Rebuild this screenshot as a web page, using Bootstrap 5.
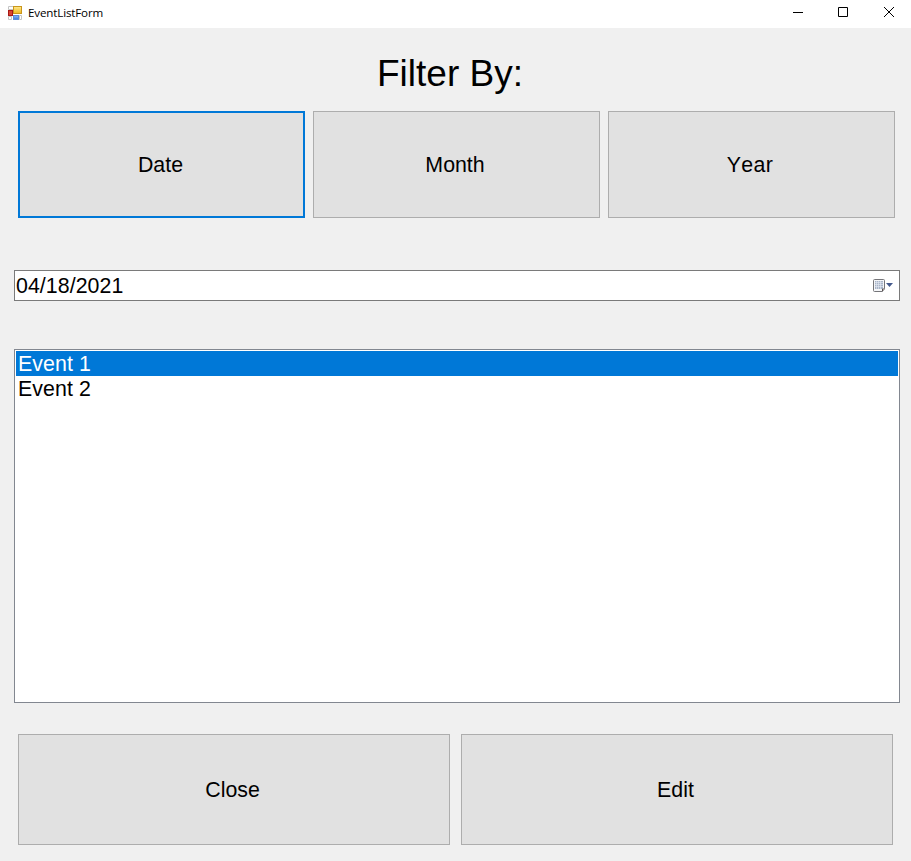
<!DOCTYPE html>
<html lang="en">
<head>
<meta charset="utf-8">
<title>EventListForm</title>
<meta name="viewport" content="width=device-width, initial-scale=1">
<link href="https://cdn.jsdelivr.net/npm/bootstrap@5.3.0/dist/css/bootstrap.min.css" rel="stylesheet">
<style>
body { background: #f0f0f0; color: #000; font: 21.33px/25px "Liberation Sans", Arial, sans-serif; font-kerning: none; height: 861px; }
.titlebar { height: 28px; padding-left: 8px; font: 12px/16px "Open Sans", "Noto Sans", sans-serif; }
.app-name { margin-left: 6px; font-size: 11.6px; letter-spacing: -.15px; padding-bottom: 2px; }
.app-icon { margin-bottom: 3px; }
.caption-btn { width: 46px; height: 25px; padding-left: 2px; }
.heading { font-size: 37px; line-height: 44px; padding: 24px 11px 15px 0; margin: 0; font-weight: 400; }
.form-btn { background: #e1e1e1; border: 1px solid #adadad; color: #000; font-size: 21.33px; line-height: 25px; padding: 2px 3px 0 0; flex: 1 1 0; font-kerning: none; }
.form-btn:hover { background: #e5f1fb; border-color: #0078d7; }
.form-btn.is-default { border: 2px solid #0078d7; padding-right: 2px; }
.filters { display: grid; grid-template-columns: repeat(3, 287px); gap: 8px; margin: 0 16px 0 18px; height: 107px; }
.year-btn { letter-spacing: .4px; }
.date-box { margin: 52px 11px 0 14px; height: 31px; border: 1px solid #7a7a7a; padding: 0 5px 0 1px; }
.date-text { padding-top: 2px; letter-spacing: .06px; }
.event-list { margin: 48px 11px 0 14px; height: 354px; border: 1px solid #828790; padding: 1px; }
.event-row { height: 25px; border: 0; border-radius: 0; padding: 0 2px; color: #000; background: #fff; line-height: 26px; letter-spacing: .08px; }
.event-row.active { background: #0078d7; color: #fff; }
.actions { gap: 11px; margin: 31px 18px 0 18px; height: 111px; }
</style>
</head>
<body class="overflow-hidden d-flex flex-column">
<header class="titlebar bg-white d-flex justify-content-between flex-shrink-0">
  <div class="d-flex align-items-center">
    <svg width="14" height="14" viewBox="0 0 14 14" class="app-icon d-block" aria-hidden="true">
      <defs>
        <linearGradient id="gy" x2="0" y2="1"><stop stop-color="#ffe98c"/><stop offset="1" stop-color="#f0b820"/></linearGradient>
        <linearGradient id="gb" x2="0" y2="1"><stop stop-color="#8cb8f8"/><stop offset="1" stop-color="#3a78dc"/></linearGradient>
      </defs>
      <path d="M.5.5h5v3h-5zM.5 10.500h3v3h-3z" fill="#fff" stroke="#c4c4c4"/>
      <path d="M11.500 9.500h2v4h-2z" fill="#fff" stroke="#c4c4c4"/>
      <rect x=".5" y="4.500" width="4" height="5" fill="#d94430" stroke="#a81818"/>
      <rect x="5.500" y=".5" width="8" height="7" fill="url(#gy)" stroke="#c9961c"/>
      <rect x="5.500" y="9.500" width="5" height="4" fill="url(#gb)" stroke="#5b8bd8"/>
    </svg>
    <span class="app-name text-nowrap">EventListForm</span>
  </div>
  <div class="d-flex">
    <div class="caption-btn d-flex align-items-center justify-content-center"><svg width="11" height="11" aria-label="Minimize"><path d="M1 5.500h10" stroke="#000"/></svg></div>
    <div class="caption-btn d-flex align-items-center justify-content-center"><svg width="11" height="11" aria-label="Maximize"><path d="M.5.5h9v9h-9z" fill="none" stroke="#000"/></svg></div>
    <div class="caption-btn d-flex align-items-center justify-content-center"><svg width="11" height="11" aria-label="Close"><path d="M0 0l10 10M10 0l-10 10" stroke="#000"/></svg></div>
  </div>
</header>
<main>
  <h1 class="heading text-center">Filter By:</h1>
  <div class="filters">
    <button class="btn rounded-0 form-btn is-default">Date</button>
    <button class="btn rounded-0 form-btn">Month</button>
    <button class="btn rounded-0 form-btn year-btn">Year</button>
  </div>
  <div class="date-box bg-white d-flex align-items-center justify-content-between">
    <span class="date-text">04/18/2021</span>
    <svg width="21" height="13" viewBox="0 0 21 13" aria-hidden="true">
      <path d="M1.500.5h9q1 0 1 1v8l-2 3h-8q-1 0-1-1v-10q0-1 1-1z" fill="#f6f7f9" stroke="#757579"/>
      <path d="M2 2h8v8H2z" fill="#a9b5c8"/>
      <path d="M2 3.500h8M2 5.500h8M2 7.500h8M3.500 2v8M5.500 2v8M7.500 2v8" stroke="#e8edf5" stroke-width=".6"/>
      <path d="M9.500 12v-2h2" fill="#fff" stroke="#5a5050"/>
      <path d="M13 4h7l-3.500 4z" fill="#44598c"/>
    </svg>
  </div>
  <div class="event-list bg-white">
    <div class="list-group rounded-0">
      <div class="list-group-item event-row active">Event 1</div>
      <div class="list-group-item event-row">Event 2</div>
    </div>
  </div>
  <div class="actions d-flex">
    <button class="btn rounded-0 form-btn">Close</button>
    <button class="btn rounded-0 form-btn">Edit</button>
  </div>
</main>
<script src="https://cdn.jsdelivr.net/npm/bootstrap@5.3.0/dist/js/bootstrap.bundle.min.js"></script>
</body>
</html>
